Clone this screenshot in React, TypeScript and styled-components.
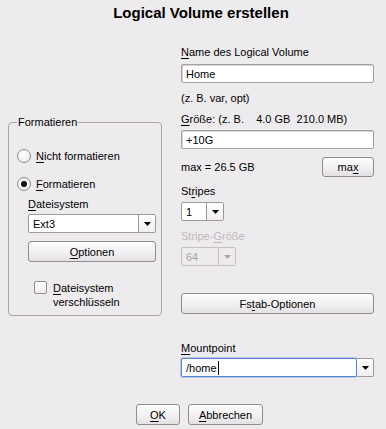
import React from "react";
import styled, { createGlobalStyle } from "styled-components";

const Global = createGlobalStyle`
  html, body { margin: 0; padding: 0; background: #eeebee; }
  body { font-family: "Liberation Sans", Arial, sans-serif; font-size: 11px; color: #000; }
  #root { width: 386px; height: 429px; }
`;

const Page = styled.div`
  width: 386px;
  height: 429px;
  display: flex;
  flex-direction: column;
  background: #eeebee;
  overflow: hidden;
`;

const Title = styled.div`
  margin-top: 5px;
  padding-left: 16px;
  text-align: center;
  font-weight: bold;
  font-size: 15px;
  line-height: 16px;
`;

const Body = styled.div`
  display: flex;
  flex-direction: row;
  align-items: flex-start;
  margin-top: 24px;
`;

const LeftCol = styled.div`
  width: 154px;
  margin-left: 8px;
  margin-top: 70px;
`;

const RightCol = styled.div`
  width: 193px;
  margin-left: 19px;
  display: flex;
  flex-direction: column;
  align-items: flex-start;
`;

const Group = styled.fieldset`
  margin: 0;
  padding: 0 6px 6px 8px;
  border: 1px solid #a9a5a9;
  border-radius: 4px;
  min-width: 0;
  display: flex;
  flex-direction: column;
  align-items: flex-start;
`;

const Legend = styled.legend`
  padding: 0 1px;
  font-size: 11px;
  line-height: 14px;
`;

const Label = styled.div<{ $mt?: number; $disabled?: boolean; $indent?: number }>`
  margin-top: ${(p) => p.$mt ?? 0}px;
  margin-left: ${(p) => p.$indent ?? 0}px;
  line-height: 14px;
  white-space: pre;
  color: ${(p) => (p.$disabled ? "#bcb8bc" : "#000")};
`;

const Mn = styled.span`
  text-decoration: underline;
  text-underline-offset: 2px;
`;

const TextField = styled.div<{ $mt?: number; $focus?: boolean; $w?: number }>`
  margin-top: ${(p) => p.$mt ?? 0}px;
  box-sizing: border-box;
  width: ${(p) => p.$w ?? 193}px;
  height: 19px;
  background: #fff;
  border: 1px solid ${(p) => (p.$focus ? "#5a86cf" : "#a4a0a4")};
  border-radius: 2px;
  padding: 0 4px;
  display: flex;
  align-items: center;
  line-height: 14px;
  box-shadow: ${(p) => (p.$focus ? "0 0 0 1px rgba(90,134,207,0.35)" : "inset 1px 1px 0 #d8d4d8")};
`;

const Caret = styled.span`
  display: inline-block;
  width: 1px;
  height: 14px;
  background: #000;
  margin-left: 1px;
`;

const Combo = styled.div<{ $mt?: number; $w: number; $disabled?: boolean; $indent?: number }>`
  margin-top: ${(p) => p.$mt ?? 0}px;
  margin-left: ${(p) => p.$indent ?? 0}px;
  box-sizing: border-box;
  width: ${(p) => p.$w}px;
  height: 19px;
  display: flex;
  border: 1px solid ${(p) => (p.$disabled ? "#c4c0c4" : "#9c989c")};
  border-radius: 2px;
  background: ${(p) => (p.$disabled ? "#eeebee" : "#fff")};
  color: ${(p) => (p.$disabled ? "#a8a4a8" : "#000")};
`;

const ComboText = styled.div`
  flex: 1;
  display: flex;
  align-items: center;
  padding-left: 4px;
  line-height: 14px;
`;

const ArrowBox = styled.div<{ $disabled?: boolean }>`
  width: 16px;
  border-left: 1px solid ${(p) => (p.$disabled ? "#c4c0c4" : "#9c989c")};
  display: flex;
  align-items: center;
  justify-content: center;
  background: ${(p) => (p.$disabled ? "#eeebee" : "linear-gradient(#ffffff, #f1eef1)")};
`;

const EditCombo = styled.div<{ $mt?: number }>`
  margin-top: ${(p) => p.$mt ?? 0}px;
  width: 193px;
  height: 19px;
  display: flex;
`;

const SideArrow = styled.div`
  box-sizing: border-box;
  width: 17px;
  height: 19px;
  border: 1px solid #9c989c;
  border-left: none;
  border-radius: 0 2px 2px 0;
  display: flex;
  align-items: center;
  justify-content: center;
  background: linear-gradient(#ffffff, #f1eef1);
`;

const Button = styled.div<{ $mt?: number; $w: number; $h?: number; $indent?: number }>`
  margin-top: ${(p) => p.$mt ?? 0}px;
  margin-left: ${(p) => p.$indent ?? 0}px;
  box-sizing: border-box;
  width: ${(p) => p.$w}px;
  height: ${(p) => p.$h ?? 21}px;
  border: 1px solid #8f8b8f;
  border-radius: 3px;
  background: linear-gradient(#fcfcfc 0%, #f3f1f3 50%, #e4e1e4 100%);
  display: flex;
  align-items: center;
  justify-content: center;
  line-height: 14px;
`;

const MaxRow = styled.div`
  margin-top: 8px;
  width: 193px;
  display: flex;
  align-items: center;
  justify-content: space-between;
`;

const OptRow = styled.div<{ $mt?: number }>`
  margin-top: ${(p) => p.$mt ?? 0}px;
  display: flex;
  align-items: center;
  height: 16px;
`;

const Radio = styled.span<{ $checked?: boolean }>`
  box-sizing: border-box;
  width: 14px;
  height: 14px;
  border-radius: 50%;
  border: 1px solid #8e8a8e;
  background: radial-gradient(circle at 40% 35%, #ffffff 0%, #f4f2f4 60%, #dcd8dc 100%);
  display: flex;
  align-items: center;
  justify-content: center;
  margin-right: 5px;
  &::after {
    content: "";
    display: ${(p) => (p.$checked ? "block" : "none")};
    width: 6px;
    height: 6px;
    border-radius: 50%;
    background: #111;
  }
`;

const CheckRow = styled.div`
  margin-top: 19px;
  margin-left: 17px;
  display: flex;
  align-items: flex-start;
`;

const CheckBox = styled.span`
  box-sizing: border-box;
  width: 13px;
  height: 13px;
  margin-right: 6px;
  border: 1px solid #8e8a8e;
  border-radius: 2px;
  background: linear-gradient(#ffffff, #eeebee);
`;

const CheckText = styled.div`
  line-height: 14px;
`;

const Footer = styled.div`
  margin-top: 27px;
  padding-left: 13px;
  display: flex;
  justify-content: center;
  gap: 8px;
`;

const Arrow = ({ color = "#000" }: { color?: string }) => (
  <svg width="7" height="4" viewBox="0 0 7 4">
    <polygon points="0,0 7,0 3.5,4" fill={color} />
  </svg>
);

export default function App() {
  return (
    <>
      <Global />
      <Page>
        <Title>Logical Volume erstellen</Title>
        <Body>
          <LeftCol>
            <Group>
              <Legend>Formatieren</Legend>
              <OptRow $mt={19}>
                <Radio />
                <span>
                  <Mn>N</Mn>icht formatieren
                </span>
              </OptRow>
              <OptRow $mt={12}>
                <Radio $checked />
                <span>
                  <Mn>F</Mn>ormatieren
                </span>
              </OptRow>
              <Label $mt={5} $indent={11}>
                <Mn>D</Mn>ateisystem
              </Label>
              <Combo $mt={3} $w={128} $indent={11}>
                <ComboText>Ext3</ComboText>
                <ArrowBox>
                  <Arrow />
                </ArrowBox>
              </Combo>
              <Button $mt={8} $w={128} $indent={11}>
                <span>
                  <Mn>O</Mn>ptionen
                </span>
              </Button>
              <CheckRow>
                <CheckBox />
                <CheckText>
                  <Mn>D</Mn>ateisystem
                  <br />
                  verschlüsseln
                </CheckText>
              </CheckRow>
            </Group>
          </LeftCol>
          <RightCol>
            <Label>
              <Mn>N</Mn>ame des Logical Volume
            </Label>
            <TextField $mt={5}>Home</TextField>
            <Label $mt={8}>(z. B. var, opt)</Label>
            <Label $mt={7}>
              <Mn>G</Mn>röße: (z. B.    4.0 GB  210.0 MB)
            </Label>
            <TextField $mt={4}>+10G</TextField>
            <MaxRow>
              <span>max = 26.5 GB</span>
              <Button $w={52} $h={20}>
                <span>
                  ma<Mn>x</Mn>
                </span>
              </Button>
            </MaxRow>
            <Label $mt={7}>
              St<Mn>r</Mn>ipes
            </Label>
            <Combo $mt={4} $w={43}>
              <ComboText>1</ComboText>
              <ArrowBox>
                <Arrow />
              </ArrowBox>
            </Combo>
            <Label $mt={8} $disabled>
              Stripe-<Mn>G</Mn>röße
            </Label>
            <Combo $mt={4} $w={55} $disabled>
              <ComboText>64</ComboText>
              <ArrowBox $disabled>
                <Arrow color="#a8a4a8" />
              </ArrowBox>
            </Combo>
            <Button $mt={27} $w={193}>
              <span>
                Fs<Mn>t</Mn>ab-Optionen
              </span>
            </Button>
            <Label $mt={27}>
              <Mn>M</Mn>ountpoint
            </Label>
            <EditCombo $mt={3}>
              <TextField $focus $w={176}>
                /home
                <Caret />
              </TextField>
              <SideArrow>
                <Arrow />
              </SideArrow>
            </EditCombo>
          </RightCol>
        </Body>
        <Footer>
          <Button $w={44}>
            <span>
              <Mn>O</Mn>K
            </span>
          </Button>
          <Button $w={75}>
            <span>
              <Mn>A</Mn>bbrechen
            </span>
          </Button>
        </Footer>
      </Page>
    </>
  );
}
